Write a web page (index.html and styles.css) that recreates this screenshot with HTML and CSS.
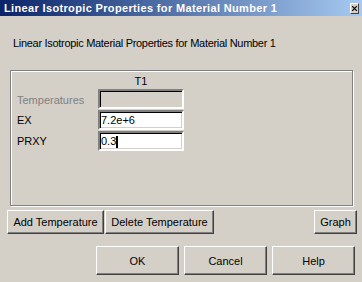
FILE: index.html
```html
<!DOCTYPE html>
<html lang="en">
<head>
    <meta charset="UTF-8">
    <title>Linear Isotropic Properties for Material Number 1</title>
    <link rel="stylesheet" href="styles.css">
</head>
<body>
    <div class="dialog">
        <div class="titlebar">
            <span class="title-text">Linear Isotropic Properties for Material Number 1</span>
            <button class="close-button" title="Close">
                <svg width="5" height="5" viewBox="0 0 5 5"><path d="M0 0L5 5M5 0L0 5" stroke="#000" stroke-width="1.2"/></svg>
            </button>
        </div>

        <div class="heading">Linear Isotropic Material Properties for Material Number 1</div>

        <div class="group">
            <div class="prop-table">
                <span></span>
                <span class="col-head">T1</span>

                <span class="label disabled">Temperatures</span>
                <div class="field disabled"></div>

                <span class="label">EX</span>
                <div class="field">7.2e+6</div>

                <span class="label">PRXY</span>
                <div class="field">0.3<span class="caret"></span></div>
            </div>
        </div>

        <div class="tool-row">
            <button class="win-button add-temp">Add Temperature</button>
            <button class="win-button del-temp">Delete Temperature</button>
            <button class="win-button graph">Graph</button>
        </div>

        <div class="dialog-buttons">
            <button class="win-button big">OK</button>
            <button class="win-button big">Cancel</button>
            <button class="win-button big">Help</button>
        </div>
    </div>
</body>
</html>
```

FILE: styles.css
```css
:root {
    --face: #d4d0c8;
    --shadow: #808080;
    --dark: #404040;
    --light: #ffffff;
}

body {
    margin: 0;
    background: var(--face);
    font-family: 'Liberation Sans', Arial, sans-serif;
    font-size: 11px;
    color: #000;
}

.dialog {
    width: 362px;
    height: 282px;
    display: flex;
    flex-direction: column;
    overflow: hidden;
}

.titlebar {
    height: 16px;
    display: flex;
    align-items: center;
    justify-content: space-between;
    padding: 0 3px 0 4px;
    background: linear-gradient(to right, #0a246a, #a6caf0);
}

.title-text {
    color: #fff;
    font-weight: bold;
    font-size: 11px;
    letter-spacing: 0.35px;
    line-height: 13px;
}

.close-button {
    width: 9px;
    height: 11px;
    padding: 0;
    margin-top: 1px;
    background: var(--face);
    border: 1px solid;
    border-color: var(--light) var(--dark) var(--dark) var(--light);
    display: flex;
    align-items: center;
    justify-content: center;
}

.heading {
    margin: 21px 0 0 13px;
    line-height: 13px;
    letter-spacing: -0.3px;
}

.group {
    margin: 20px 0 0 10px;
    width: 343px;
    height: 136px;
    box-sizing: border-box;
    border: 1px solid var(--shadow);
    box-shadow: 1px 1px 0 var(--light), inset 1px 1px 0 var(--light);
    padding: 4px 0 0 6px;
}

.prop-table {
    display: grid;
    grid-template-columns: 81px 86px;
    grid-template-rows: 13px repeat(3, 20px);
    row-gap: 1px;
    align-items: center;
    line-height: 13px;
}

.col-head {
    text-align: center;
    margin-bottom: 3px;
    align-self: start;
}

.prop-table .col-head + .label {
    margin-top: 3px;
}

.label.disabled {
    color: var(--shadow);
}

.field {
    height: 20px;
    box-sizing: border-box;
    background: #fff;
    border: 2px solid;
    border-color: var(--shadow) var(--light) var(--light) var(--shadow);
    box-shadow: inset 1px 1px 0 #000, inset -1px -1px 0 var(--face);
    padding: 1px 1px 0;
    line-height: 15px;
    display: flex;
    align-items: center;
}

.field.disabled {
    background: var(--face);
}

.caret {
    display: inline-block;
    width: 2px;
    height: 12px;
    background: #000;
}

.win-button {
    font-family: inherit;
    font-size: 11px;
    color: #000;
    background: var(--face);
    border: 1px solid;
    border-color: var(--light) var(--dark) var(--dark) var(--light);
    box-shadow: inset -1px -1px 0 var(--shadow);
    padding: 0;
    box-sizing: border-box;
}

.tool-row {
    display: flex;
    gap: 1px;
    margin-top: 4px;
    padding: 0 5px 0 7px;
    height: 24px;
}

.add-temp {
    width: 97px;
}

.del-temp {
    width: 109px;
}

.graph {
    width: 43px;
    margin-left: auto;
}

.dialog-buttons {
    display: flex;
    gap: 5px;
    margin-top: 12px;
    padding-left: 96px;
}

.win-button.big {
    width: 83px;
    height: 29px;
}
```
